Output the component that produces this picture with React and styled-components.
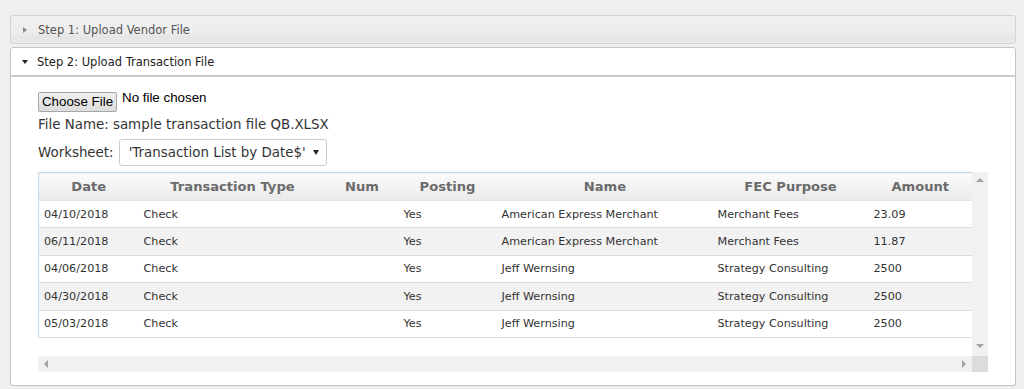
import React from "react";
import styled, { createGlobalStyle } from "styled-components";

const Global = createGlobalStyle`
  html, body { margin: 0; padding: 0; }
  body {
    background: #efefef;
    font-family: "DejaVu Sans", Verdana, sans-serif;
    color: #333;
  }
`;

const Page = styled.div`
  padding: 15px 8px 2px 10px;
`;

const Accordion = styled.div`
  display: flex;
  flex-direction: column;
  gap: 3px;
`;

const Header = styled.div`
  display: flex;
  align-items: center;
  gap: 9px;
  height: 29px;
  box-sizing: border-box;
  padding: 0 0 0 ${(p) => (p.$open ? 11 : 12)}px;
  border: 1px solid ${(p) => (p.$open ? "#c5c5c5" : "#d3d3d3")};
  border-radius: ${(p) => (p.$open ? "3px 3px 0 0" : "3px")};
  background: ${(p) =>
    p.$open
      ? "#ffffff"
      : "linear-gradient(to bottom, #f0f0f0 0%, #ededed 60%, #e5e5e5 80%, #ebebeb 100%)"};
  color: ${(p) => (p.$open ? "#222" : "#555")};
  font-size: 11.5px;
`;

const TriRight = styled.span`
  width: 0;
  height: 0;
  border-top: 3px solid transparent;
  border-bottom: 3px solid transparent;
  border-left: 4px solid #888;
  margin-right: 2px;
  margin-top: 1px;
`;

const TriDown = styled.span`
  width: 0;
  height: 0;
  border-left: 3px solid transparent;
  border-right: 3px solid transparent;
  border-top: 4px solid #222;
  margin-top: 1px;
`;

const Content = styled.div`
  margin-top: -3px;
  border: 1px solid #c5c5c5;
  border-top: 1px solid #d0d0d0;
  border-radius: 0 0 3px 3px;
  background: #fff;
  padding: 15px 27px 13px 27px;
  display: flex;
  flex-direction: column;
`;

const FileRow = styled.div`
  display: flex;
  align-items: flex-start;
  gap: 5px;
  height: 21px;
  font-family: "Liberation Sans", Arial, sans-serif;
  font-size: 13.33px;
  color: #000;
`;

const FileButton = styled.button`
  width: 79px;
  height: 20px;
  box-sizing: border-box;
  padding: 0;
  margin: 0;
  border: 1px solid #a6a6a6;
  border-radius: 2px;
  background: linear-gradient(to bottom, #f0f0f0, #dcdcdc);
  font-family: "Liberation Sans", Arial, sans-serif;
  font-size: 13.33px;
  color: #000;
  line-height: 18px;
`;

const NoFile = styled.span`
  line-height: 12px;
`;

const InfoLine = styled.div`
  font-size: 13.4px;
  color: #333;
  line-height: 18px;
  margin-top: 3px;
`;

const WorksheetRow = styled.div`
  display: flex;
  align-items: center;
  gap: 5px;
  margin-top: 5px;
  font-size: 13.4px;
  color: #333;
`;

const Select = styled.div`
  width: 208px;
  height: 27px;
  box-sizing: border-box;
  border: 1px solid #cccccc;
  border-radius: 3px;
  background: #fff;
  display: flex;
  align-items: center;
  justify-content: space-between;
  padding: 0 7px 0 9px;
  font-size: 13.4px;
  color: #333;
  white-space: nowrap;
  overflow: hidden;
`;

const SelectArrow = styled.span`
  flex: none;
  width: 0;
  height: 0;
  border-left: 3px solid transparent;
  border-right: 3px solid transparent;
  border-top: 5px solid #222;
`;

const ScrollFrame = styled.div`
  margin-top: 6px;
  width: 950px;
  display: grid;
  grid-template-columns: 934px 16px;
  grid-template-rows: 184px 16px;
`;

const TableArea = styled.div`
  background: #fff;
  overflow: hidden;
`;

const Table = styled.table`
  width: 934px;
  table-layout: fixed;
  border-collapse: collapse;
  box-sizing: border-box;
  border: 1px solid #c5dbec;
  border-bottom: none;
`;

const Th = styled.th`
  height: 27px;
  padding: 0;
  text-align: center;
  font-size: 13.1px;
  font-weight: bold;
  color: #6b6b6b;
  background: linear-gradient(to bottom, #fbfbfb, #e9e9e9);
  border-bottom: 1px solid #e2e2e2;
`;

const Tr = styled.tr`
  background: ${(p) => (p.$alt ? "#f2f2f2" : "#fff")};
`;

const Td = styled.td`
  height: 26.4px;
  padding: 0 0 0 ${(p) => p.$pad ?? 5}px;
  font-size: 11.2px;
  color: #333;
  border-bottom: 1px solid #dcdcdc;
  white-space: nowrap;
  overflow: hidden;
`;

const VScroll = styled.div`
  background: #f1f1f1;
  display: flex;
  flex-direction: column;
  justify-content: space-between;
  align-items: center;
  padding: 6px 0 8px;
  box-sizing: border-box;
`;

const HScroll = styled.div`
  background: #f1f1f1;
  display: flex;
  justify-content: space-between;
  align-items: center;
  padding: 0 6px 0 6px;
`;

const Corner = styled.div`
  background: #dcdcdc;
`;

const Arrow = styled.span`
  width: 0;
  height: 0;
  ${(p) =>
    p.$dir === "up"
      ? "border-left: 4px solid transparent; border-right: 4px solid transparent; border-bottom: 4px solid #a3a3a3;"
      : p.$dir === "down"
      ? "border-left: 4px solid transparent; border-right: 4px solid transparent; border-top: 4px solid #a3a3a3;"
      : p.$dir === "left"
      ? "border-top: 4px solid transparent; border-bottom: 4px solid transparent; border-right: 4px solid #a3a3a3;"
      : "border-top: 4px solid transparent; border-bottom: 4px solid transparent; border-left: 4px solid #a3a3a3;"}
`;

const columns = [
  { key: "date", label: "Date", width: 100, pad: 5 },
  { key: "type", label: "Transaction Type", width: 188, pad: 5 },
  { key: "num", label: "Num", width: 71, pad: 5 },
  { key: "posting", label: "Posting", width: 100, pad: 6 },
  { key: "name", label: "Name", width: 215, pad: 4 },
  { key: "fec", label: "FEC Purpose", width: 156, pad: 5 },
  { key: "amount", label: "Amount", width: 104, pad: 5 },
];

const rows = [
  { date: "04/10/2018", type: "Check", num: "", posting: "Yes", name: "American Express Merchant", fec: "Merchant Fees", amount: "23.09" },
  { date: "06/11/2018", type: "Check", num: "", posting: "Yes", name: "American Express Merchant", fec: "Merchant Fees", amount: "11.87" },
  { date: "04/06/2018", type: "Check", num: "", posting: "Yes", name: "Jeff Wernsing", fec: "Strategy Consulting", amount: "2500" },
  { date: "04/30/2018", type: "Check", num: "", posting: "Yes", name: "Jeff Wernsing", fec: "Strategy Consulting", amount: "2500" },
  { date: "05/03/2018", type: "Check", num: "", posting: "Yes", name: "Jeff Wernsing", fec: "Strategy Consulting", amount: "2500" },
];

export default function App() {
  return (
    <>
      <Global />
      <Page>
        <Accordion>
          <Header>
            <TriRight />
            <span>Step 1: Upload Vendor File</span>
          </Header>
          <Header $open>
            <TriDown />
            <span>Step 2: Upload Transaction File</span>
          </Header>
          <Content>
            <FileRow>
              <FileButton type="button">Choose File</FileButton>
              <NoFile>No file chosen</NoFile>
            </FileRow>
            <InfoLine>File Name: sample transaction file QB.XLSX</InfoLine>
            <WorksheetRow>
              <span>Worksheet:</span>
              <Select>
                <span>'Transaction List by Date$'</span>
                <SelectArrow />
              </Select>
            </WorksheetRow>
            <ScrollFrame>
              <TableArea>
                <Table>
                  <colgroup>
                    {columns.map((c) => (
                      <col key={c.key} style={{ width: c.width }} />
                    ))}
                  </colgroup>
                  <thead>
                    <tr>
                      {columns.map((c) => (
                        <Th key={c.key}>{c.label}</Th>
                      ))}
                    </tr>
                  </thead>
                  <tbody>
                    {rows.map((r, i) => (
                      <Tr key={i} $alt={i % 2 === 1}>
                        {columns.map((c) => (
                          <Td key={c.key} $pad={c.pad}>
                            {r[c.key]}
                          </Td>
                        ))}
                      </Tr>
                    ))}
                  </tbody>
                </Table>
              </TableArea>
              <VScroll>
                <Arrow $dir="up" />
                <Arrow $dir="down" />
              </VScroll>
              <HScroll>
                <Arrow $dir="left" />
                <Arrow $dir="right" />
              </HScroll>
              <Corner />
            </ScrollFrame>
          </Content>
        </Accordion>
      </Page>
    </>
  );
}
